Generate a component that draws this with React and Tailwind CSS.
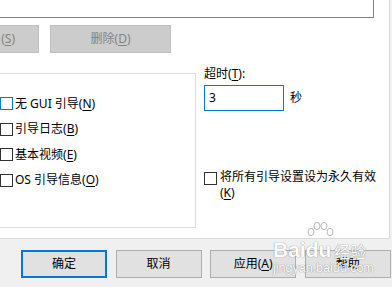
import React from 'react'

const font = "font-['Noto_Sans','Noto_Sans_CJK_SC',sans-serif]"

function Key({ k }) {
  return <span>(<span className="underline underline-offset-2 decoration-1">{k}</span>)</span>
}

function Check({ label, k, focus }) {
  return (
    <div className="flex items-center h-[25.5px]">
      <span className={`w-[13px] h-[13px] border bg-white shrink-0 ${focus ? 'border-[#0078d7]' : 'border-[#333333]'}`} />
      <span className="ml-[2px] text-[12px] leading-[16px] text-black whitespace-nowrap">
        {label}<Key k={k} />
      </span>
    </div>
  )
}

function Btn({ children, primary }) {
  return (
    <div
      className={`w-[86px] h-[28px] flex items-center justify-center bg-[#e1e1e1] text-[12px] text-black ${
        primary ? 'border-2 border-[#0078d7]' : 'border border-[#adadad]'
      }`}
    >
      {children}
    </div>
  )
}

function Watermark() {
  return (
    <div className="absolute left-[273px] top-[226px] pointer-events-none select-none text-white opacity-90 [text-shadow:0_0_1px_#8f8f8f,0_0_1px_#8f8f8f]">
      <div className="flex items-end h-[34px]">
        <span className="text-[21px] font-bold leading-[20px] font-['Liberation_Sans',sans-serif]">Bai</span>
        <span className="relative text-[21px] font-bold leading-[20px] font-['Liberation_Sans',sans-serif]">
          du
          <svg className="absolute -top-[19px] -left-[1px]" width="30" height="20" viewBox="0 0 30 20">
            <g fill="#ffffff" stroke="#a0a0a0" strokeWidth="0.8">
              <ellipse cx="6" cy="11" rx="3" ry="3.6" />
              <ellipse cx="12" cy="5" rx="3" ry="3.6" />
              <ellipse cx="19" cy="5" rx="3" ry="3.6" />
              <ellipse cx="25" cy="11" rx="3" ry="3.6" />
            </g>
          </svg>
        </span>
        <span className="ml-[3px] text-[16px] leading-[18px] font-['Noto_Sans_CJK_SC',sans-serif]">经验</span>
      </div>
      <div className="text-[12.5px] leading-[14px] font-['Liberation_Sans',sans-serif] mt-[1px]">jingyan.baidu.com</div>
    </div>
  )
}

export default function App() {
  return (
    <div className={`relative w-[392px] h-[287px] overflow-hidden bg-[#f0f0f0] ${font}`}>
      <div className="w-[390px] h-[239px] bg-white border-r border-b border-[#d9d9d9] flex flex-col">
        {/* list box edge */}
        <div className="w-[374px] h-[18px] border-r border-b border-[#828282]" />

        {/* disabled buttons */}
        <div className="flex mt-[7px]">
          <div className="-ml-[41px] w-[80px] h-[28px] bg-[#cccccc] border border-[#bfbfbf] flex items-center justify-end pr-[23px] text-[12px] text-[#838383]">
            <Key k="S" />
          </div>
          <div className="ml-[11px] w-[121px] h-[28px] bg-[#cccccc] border border-[#bfbfbf] flex items-center justify-center text-[12px] text-[#838383]">
            删除<Key k="D" />
          </div>
        </div>

        <div className="flex items-start mt-[13px]">
          {/* group box */}
          <div className="-ml-[40px] w-[236px] h-[155px] mt-[7px] border border-[#dcdcdc] pl-[39px] pt-[17px]">
            <Check label="无 GUI 引导" k="N" focus />
            <Check label="引导日志" k="B" />
            <Check label="基本视频" k="E" />
            <Check label="OS 引导信息" k="O" />
          </div>

          {/* timeout column */}
          <div className="ml-[8px] flex flex-col">
            <div className="text-[12px] leading-[16px] text-black">
              超时<Key k="T" />:
            </div>
            <div className="flex items-center mt-[3px]">
              <div className="w-[80px] h-[26px] border border-[#0078d7] flex items-center pl-[4px] text-[12px] text-black">
                3
              </div>
              <span className="ml-[6px] text-[12px] text-black">秒</span>
            </div>
            <div className="flex items-start mt-[58px]">
              <span className="mt-[3px] w-[13px] h-[13px] border border-[#333333] bg-white shrink-0" />
              <span className="ml-[3px] w-[158px] text-[12px] leading-[16px] text-black">
                将所有引导设置设为永久有效<Key k="K" />
              </span>
            </div>
          </div>
        </div>
      </div>

      {/* dialog buttons */}
      <div className="flex gap-[8.6px] pl-[21px] mt-[11px]">
        <Btn primary>确定</Btn>
        <Btn>取消</Btn>
        <Btn>应用<Key k="A" /></Btn>
        <Btn>帮助</Btn>
      </div>

      <Watermark />
    </div>
  )
}
